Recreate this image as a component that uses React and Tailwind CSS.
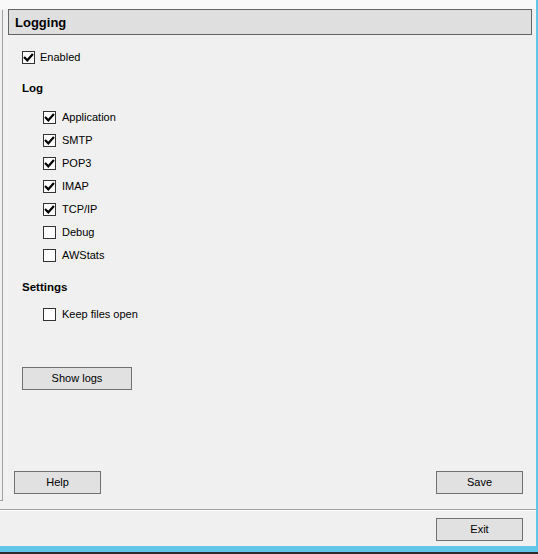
import React from "react";

const font = { fontFamily: '"Liberation Sans", Arial, sans-serif' };

function Check({ checked, label, indent }) {
  return (
    <div className={`flex h-[23px] items-center ${indent ? "pl-[35px]" : "pl-[14px]"}`}>
      <span className="flex h-[13px] w-[13px] items-center justify-center border border-[#333333] bg-white">
        {checked && (
          <svg width="11" height="11" viewBox="0 0 11 11">
            <path d="M1.8 5.8 L4.3 8.3 L9.2 2.8" fill="none" stroke="#000" strokeWidth="2.2" strokeLinecap="square" />
          </svg>
        )}
      </span>
      <span className={`${indent ? "ml-[6px]" : "ml-[5px]"} text-[11px] text-black`}>{label}</span>
    </div>
  );
}

function Btn({ children, className = "" }) {
  return (
    <button className={`flex h-[23px] items-center justify-center border border-[#707070] bg-[#e1e1e1] text-[11px] text-black ${className}`}>
      {children}
    </button>
  );
}

export default function App() {
  const logs = [
    ["Application", true],
    ["SMTP", true],
    ["POP3", true],
    ["IMAP", true],
    ["TCP/IP", true],
    ["Debug", false],
    ["AWStats", false],
  ];

  return (
    <div className="flex h-[554px] w-[538px] flex-col bg-[#f0f0f0]" style={font}>
      <div className="flex flex-1">
        <div className="flex flex-1 flex-col">
          <div className="h-[9px] bg-[#f9f9f9]" />
          <div className="flex flex-1">
            {/* tree pane edge */}
            <div className="w-[8px] pt-[1px] pb-[8px]">
              <div className="h-full w-[3px] border-r border-b border-[#a0a0a0]" />
            </div>

            <div className="flex w-[524px] flex-col">
              <div className="flex h-[26px] items-center border border-[#646464] bg-[#dfdfdf] pl-[6px] pt-[1px]">
                <span className="text-[13px] font-bold text-black">Logging</span>
              </div>

              <div className="mt-[11px]">
                <Check checked label="Enabled" />
              </div>

              <div className="mt-[8px] flex h-[23px] items-center pl-[14px] text-[11.5px] font-bold text-black">Log</div>

              <div className="mt-[6px]">
                {logs.map(([l, c]) => (
                  <Check key={l} checked={c} label={l} indent />
                ))}
              </div>

              <div className="mt-[9px] flex h-[23px] items-center pl-[14px] text-[11.5px] font-bold text-black">Settings</div>

              <div className="mt-[4px]">
                <Check checked={false} label="Keep files open" indent />
              </div>

              <Btn className="ml-[14px] mt-[41px] w-[110px]">Show logs</Btn>

              <div className="flex-1" />

              <div className="mb-[15px] flex justify-between pl-[6px] pr-[9px]">
                <Btn className="w-[87px]">Help</Btn>
                <Btn className="w-[87px]">Save</Btn>
              </div>
            </div>
            <div className="w-[4px]" />
          </div>

          <div className="border-t border-[#a0a0a0] border-b border-b-white" />
          <div className="flex h-[35px] justify-end pt-[7px] pr-[13px]">
            <Btn className="w-[87px]">Exit</Btn>
          </div>
        </div>
        <div className="w-[2px] bg-[#62c6e8]" />
      </div>
      <div className="h-[6px] bg-[#62c6e8]" />
      <div className="h-[2px] bg-[#2b2b2b]" />
    </div>
  );
}
